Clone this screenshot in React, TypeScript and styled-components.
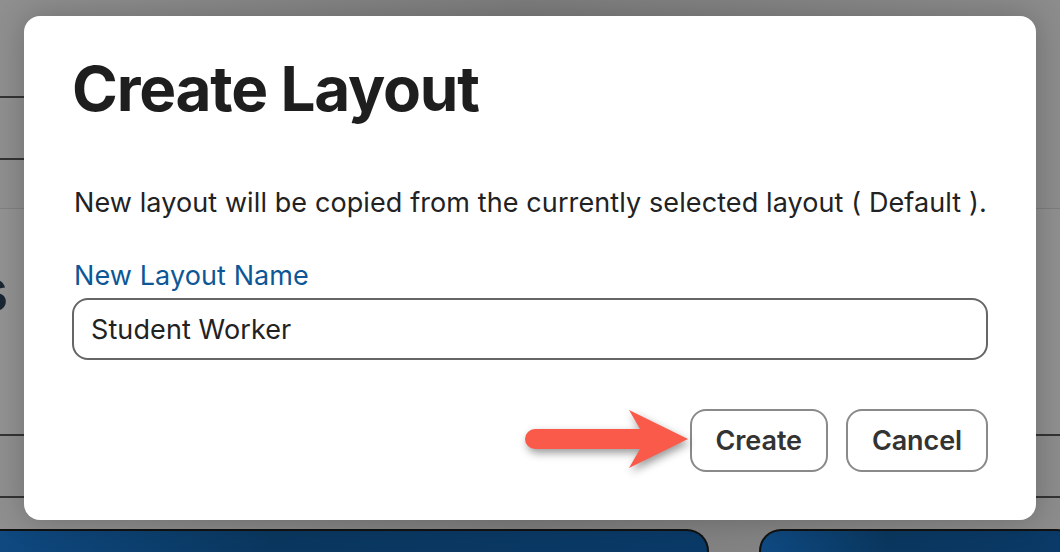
import React from 'react'
import styled, { createGlobalStyle } from 'styled-components'

const GlobalStyle = createGlobalStyle`
  html, body {
    margin: 0;
    padding: 0;
    overflow: hidden;
  }
  body {
    font-family: Inter, "Noto Sans", "Liberation Sans", sans-serif;
  }
`

const Page = styled.div`
  position: relative;
  width: 1060px;
  height: 552px;
  display: flex;
  flex-direction: column;
  background: linear-gradient(90deg, #8f8f8f 0%, #7d7d7d 50%, #8c8c8c 100%);
  overflow: hidden;
`
const TopRows = styled.div`
  width: 520px;
  display: flex;
  flex-direction: column;
`
const Row = styled.div<{ h: number }>`
  height: ${(p) => p.h}px;
  border-bottom: 2px solid #333;
  box-sizing: border-box;
`
const Band = styled.div`
  margin-top: 48px;
  height: 228px;
  box-sizing: border-box;
  border-top: 1px solid rgba(0, 0, 0, 0.12);
  border-bottom: 2px solid #333;
  background: rgba(255, 255, 255, 0.03);
  display: flex;
  align-items: flex-start;
`
const PageHeading = styled.div`
  width: 8px;
  margin-top: 46px;
  display: flex;
  justify-content: flex-end;
  font-size: 58px;
  font-weight: 700;
  color: #1b2633;
  white-space: nowrap;
  line-height: 70px;
`
const FullRow = styled.div<{ h: number }>`
  height: ${(p) => p.h}px;
  border-bottom: 2px solid #333;
  box-sizing: border-box;
`
const CardStrip = styled.div`
  margin-top: 31px;
  flex: 1;
  display: flex;
  gap: 50px;
`
const Card = styled.div<{ w: number; lead?: boolean }>`
  flex: 0 0 ${(p) => p.w}px;
  box-sizing: border-box;
  margin-left: ${(p) => (p.lead ? -20 : 0)}px;
  border: 2px solid #111;
  border-bottom: none;
  border-radius: 22px 22px 0 0;
  background: linear-gradient(90deg, #0f4a82 0%, #0a375f 40%, #0a3a68 100%);
`

const Overlay = styled.div`
  position: absolute;
  inset: 0;
  padding: 16px 24px 32px;
  box-sizing: border-box;
  display: flex;
`
const Modal = styled.div`
  flex: 1;
  background: #fff;
  border-radius: 16px;
  padding: 36px 48px 48px;
  box-shadow: 0 0 30px rgba(0, 0, 0, 0.22);
  display: flex;
  flex-direction: column;
  & > * {
    flex-shrink: 0;
  }
`
const Title = styled.h1`
  margin: 0;
  font-size: 62px;
  line-height: 74px;
  font-weight: 700;
  letter-spacing: -1.2px;
  color: #1e1e1e;
`
const Lead = styled.p`
  margin: 61px 0 0 2px;
  font-size: 27px;
  line-height: 32px;
  color: #222;
  letter-spacing: 0.1px;
  white-space: nowrap;
`
const Label = styled.label`
  margin: 41px 0 0 2px;
  font-size: 27px;
  line-height: 32px;
  color: #0d5796;
  letter-spacing: 0.1px;
`
const Field = styled.input`
  margin-top: 6px;
  height: 62px;
  box-sizing: border-box;
  border: 2px solid #666;
  border-radius: 16px;
  padding: 0 17px;
  font-family: inherit;
  font-size: 27px;
  color: #222;
  letter-spacing: 0.1px;
  outline: none;
`
const Footer = styled.div`
  margin-top: 49px;
  height: 63px;
  display: flex;
  justify-content: flex-end;
  align-items: center;
  gap: 18px;
`
const ArrowMark = styled.svg`
  margin: -5px -21px -4px 0;
  filter: drop-shadow(2px 4px 4px rgba(0, 0, 0, 0.4));
`
const Button = styled.button`
  height: 63px;
  padding: 0 24px;
  background: #fff;
  border: 2px solid #8a8a8a;
  border-radius: 16px;
  font-family: inherit;
  font-size: 27px;
  font-weight: 600;
  color: #333;
  letter-spacing: -0.1px;
`

const Arrow = () => (
  <ArrowMark width="172" height="72" viewBox="0 0 172 72">
    <path
      d="M14 25 H119 L108 6 L167 35 L108 64 L119 45 H14 A10 10 0 0 1 14 25 Z"
      fill="#fa5a4a"
    />
  </ArrowMark>
)

const App: React.FC = () => (
  <>
    <GlobalStyle />
    <Page>
      <TopRows>
        <Row h={98} />
        <Row h={62} />
      </TopRows>
      <Band>
        <PageHeading>Layouts</PageHeading>
      </Band>
      <FullRow h={62} />
      <CardStrip>
        <Card w={729} lead />
        <Card w={320} />
      </CardStrip>
      <Overlay>
        <Modal>
          <Title>Create Layout</Title>
          <Lead>New layout will be copied from the currently selected layout ( Default ).</Lead>
          <Label htmlFor="layout-name">New Layout Name</Label>
          <Field id="layout-name" defaultValue="Student Worker" />
          <Footer>
            <Arrow />
            <Button>Create</Button>
            <Button>Cancel</Button>
          </Footer>
        </Modal>
      </Overlay>
    </Page>
  </>
)

export default App
